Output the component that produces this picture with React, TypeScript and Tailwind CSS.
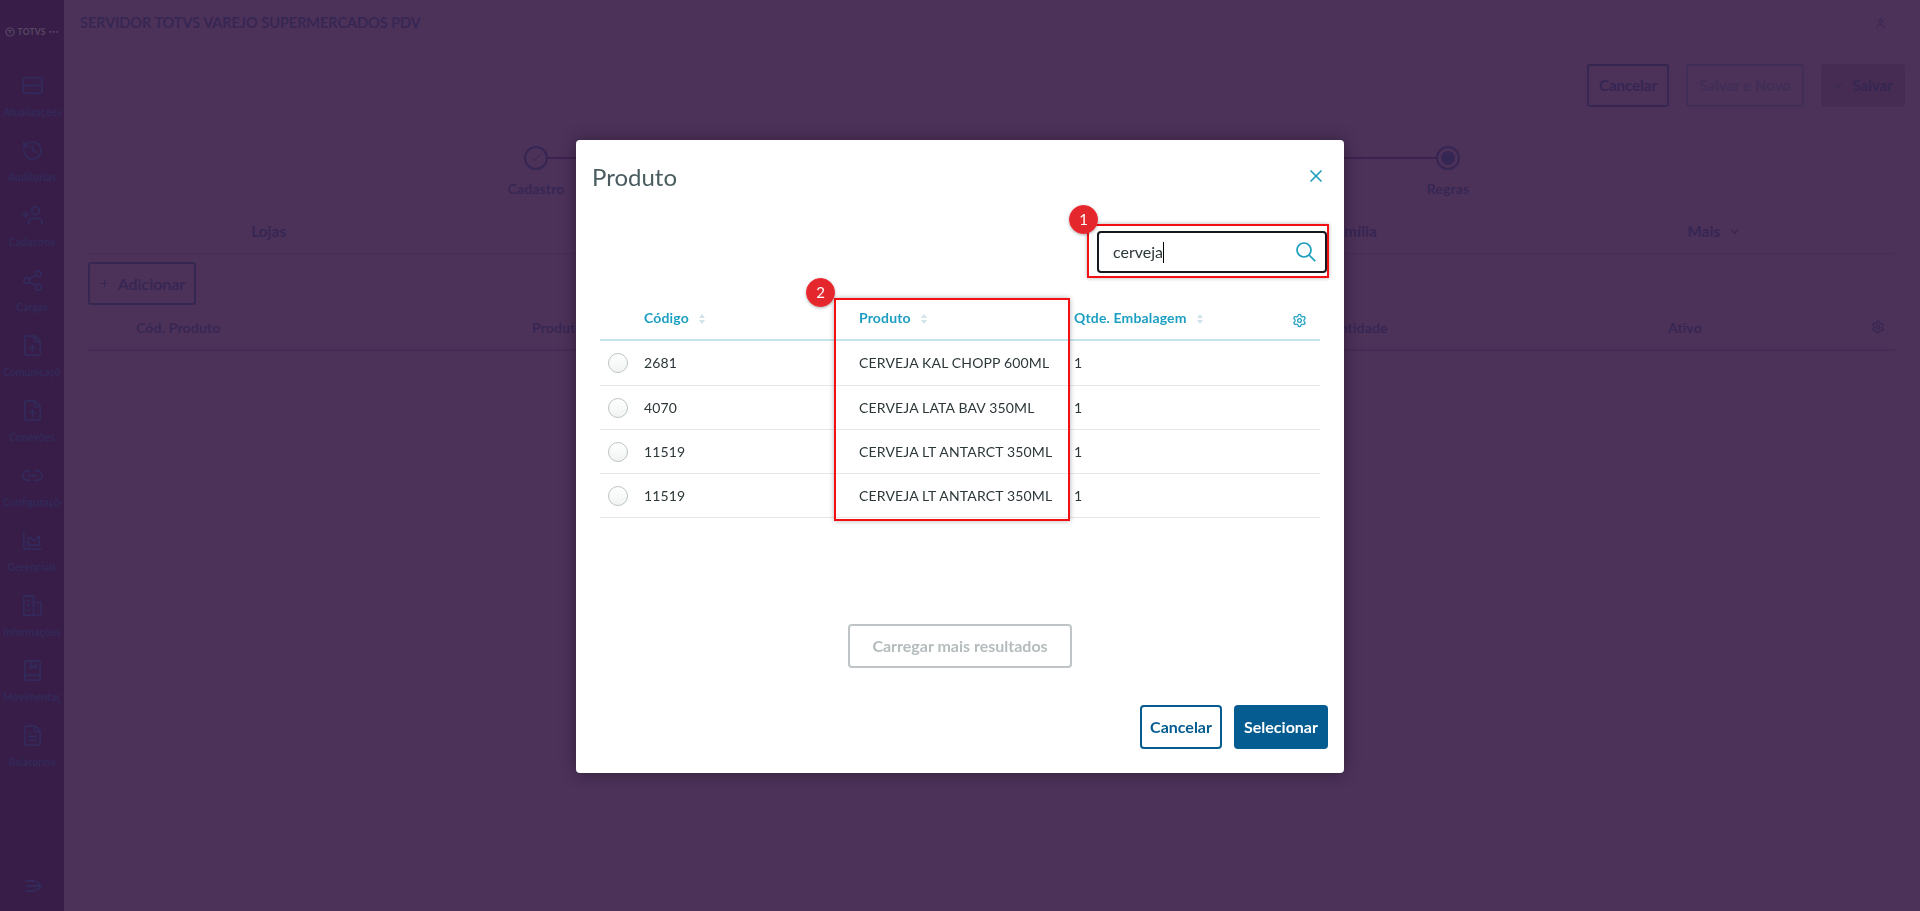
import { History, UserPlus, Share2, FileUp, Link2, BookMarked, FileText, Check, ChevronDown, Plus, Settings, X, User, ChartArea } from "lucide-react";
import type { ComponentType } from "react";

const FONT = "font-['Lato','Noto_Sans',sans-serif]";

type IconProps = { size?: number; strokeWidth?: number };

function ServerIcon({ size = 24, strokeWidth = 2 }: IconProps) {
  return (
    <svg width={size} height={size} viewBox="0 0 24 24" fill="none" stroke="currentColor" strokeWidth={strokeWidth}>
      <rect x="2" y="4" width="20" height="16" rx="2" />
      <path d="M2 12h20M14 8h1M17 8h1M14 16h1M17 16h1" />
    </svg>
  );
}

function BuildingsIcon({ size = 24, strokeWidth = 2 }: IconProps) {
  return (
    <svg width={size} height={size} viewBox="0 0 24 24" fill="none" stroke="currentColor" strokeWidth={strokeWidth}>
      <path d="M3 22V2h10v20zM13 9h8v13h-8" />
      <path d="M6 7h4M6 12h4M6 17h4M16 13h2M16 17h2" />
    </svg>
  );
}

function AddUserIcon({ size = 24, strokeWidth = 2 }: IconProps) {
  return <UserPlus size={size} strokeWidth={strokeWidth} className="-scale-x-100" />;
}

function ExpandIcon() {
  return (
    <svg width="18" height="14" viewBox="0 0 18 14" fill="none" stroke="currentColor" strokeWidth="2">
      <path d="M1 2h9M1 7h15M1 12h9M11 2l5 5-5 5" />
    </svg>
  );
}

function SearchGlyph() {
  return (
    <svg width="20" height="20" viewBox="0 0 20 20" fill="none" stroke="currentColor" strokeWidth="1.7" className="text-[#1b9dbd]">
      <circle cx="8" cy="8" r="7" />
      <path d="M13 13l6.2 6.2" />
    </svg>
  );
}

function SortIcon() {
  return (
    <svg width="6" height="10" viewBox="0 0 6 10" className="ml-[10px] inline-block" fill="#cfe3e9">
      <path d="M3 0l3 4H0zM3 10L0 6h6z" />
    </svg>
  );
}

const nav: { label: string; icon: ComponentType<IconProps> }[] = [
  { label: "Atualizações", icon: ServerIcon },
  { label: "Auditorias", icon: History },
  { label: "Cadastros", icon: AddUserIcon },
  { label: "Cargas", icon: Share2 },
  { label: "Comunicações", icon: FileUp },
  { label: "Conexões", icon: FileUp },
  { label: "Configurações", icon: Link2 },
  { label: "Gerenciais", icon: ChartArea },
  { label: "Informações", icon: BuildingsIcon },
  { label: "Movimentações", icon: BookMarked },
  { label: "Relatórios", icon: FileText },
];

const rows = [
  ["2681", "CERVEJA KAL CHOPP 600ML", "1"],
  ["4070", "CERVEJA LATA BAV 350ML", "1"],
  ["11519", "CERVEJA LT ANTARCT 350ML", "1"],
  ["11519", "CERVEJA LT ANTARCT 350ML", "1"],
];

function Sidebar() {
  return (
    <aside className="w-16 h-full shrink-0 bg-[#371d47] text-[#33295a] flex flex-col">
      <div className="h-[65px] shrink-0 flex items-center justify-center gap-[3px] text-[#574863] border-b border-[#391f49]">
        <svg width="10" height="10" viewBox="0 0 10 10" fill="none" stroke="currentColor" strokeWidth="1.2">
          <circle cx="5" cy="5" r="4" />
          <path d="M3 3.5h4M5 3.5v3" />
        </svg>
        <span className="text-[8.5px] font-bold leading-none tracking-[0.2px]">TOTVS</span>
        <span className="text-[4px] leading-none tracking-[1.2px]">●●●</span>
      </div>
      {nav.map((item) => {
        const Icon = item.icon;
        return (
          <div key={item.label} className="h-[65px] shrink-0 flex flex-col items-center pt-[9px] border-b border-[#391f49]">
            <Icon size={23} strokeWidth={2} />
            <span className="mt-[8px] w-[58px] overflow-hidden whitespace-nowrap text-center text-[10.5px] font-bold leading-[14px]">
              {item.label}
            </span>
          </div>
        );
      })}
      <div className="mt-auto pb-[18px] flex justify-center pl-[4px]">
        <ExpandIcon />
      </div>
    </aside>
  );
}

function Background() {
  return (
    <main className="flex-1 h-full min-w-0 text-[#352653] flex flex-col">
      <header className="h-[46px] pl-4 pr-[28px] flex items-center justify-between">
        <span className="text-[14.5px] font-semibold">SERVIDOR TOTVS VAREJO SUPERMERCADOS PDV</span>
        <span className="w-6 h-6 rounded-full border border-[#4f3560] flex items-center justify-center">
          <User size={11} />
        </span>
      </header>

      <div className="mt-[18px] pr-[15px] flex justify-end gap-[17px] text-[15px] font-bold">
        <button className="w-[82px] h-[43px] rounded-[3px] border-2 border-[#362752]">Cancelar</button>
        <button className="w-[118px] h-[43px] rounded-[3px] border-2 border-[#412e57] text-[#412e57]">Salvar e Novo</button>
        <button className="w-[84px] h-[43px] rounded-[3px] bg-[#462c52] flex items-center justify-center gap-[8px]">
          <Check size={11} />
          Salvar
        </button>
      </div>

      <div className="mt-[39px] ml-[460px] w-[936px] h-6 flex items-center">
        <span className="w-6 h-6 rounded-full border-2 border-[#352653] flex items-center justify-center shrink-0">
          <Check size={12} />
        </span>
        <span className="flex-1 h-[2px] bg-[#3d2250]" />
        <span className="w-6 h-6 rounded-full border-2 border-[#352653] flex items-center justify-center shrink-0">
          <span className="w-[14px] h-[14px] rounded-full bg-[#352653]" />
        </span>
      </div>
      <div className="mt-[10px] ml-[408px] w-[1040px] flex justify-between text-[14px] font-semibold leading-[18px] tracking-[0.2px]">
        <span className="w-[128px] text-center">Cadastro</span>
        <span className="w-[128px] text-center">Regras</span>
      </div>

      <div className="ml-6 mr-[25px] mt-[12px] h-[44px] border-b border-[#472c55] grid grid-cols-5 items-center text-[15px] font-bold tracking-[0.2px]">
        <span className="text-center">Lojas</span>
        <span />
        <span />
        <span className="text-center">Família</span>
        <span className="flex items-center justify-center gap-2">
          Mais <ChevronDown size={13} />
        </span>
      </div>

      <button className="ml-6 mt-[8px] w-[108px] h-[43px] rounded-[3px] border-2 border-[#362752] flex items-center justify-center gap-[8px] text-[16px] font-semibold">
        <Plus size={11} />
        Adicionar
      </button>

      <div className="ml-6 mr-[25px] h-[46px] border-b-2 border-[#472a55] flex items-center text-[14px] font-semibold tracking-[0.2px]">
        <span className="ml-12 w-[396px]">Cód. Produto</span>
        <span className="w-[781px]">Produto</span>
        <span className="w-[355px]">Quantidade</span>
        <span className="flex-1">Ativo</span>
        <span className="mr-[10px]">
          <Settings size={14} />
        </span>
      </div>
    </main>
  );
}

function Badge({ n, className }: { n: string; className: string }) {
  return (
    <span className={`absolute w-[29px] h-[29px] rounded-full bg-[#e3272d] border border-[#f3272d] text-white text-[15px] flex items-center justify-center shadow-[0_1px_3px_rgba(0,0,0,0.3)] ${className}`}>
      {n}
    </span>
  );
}

function Modal() {
  return (
    <div className="fixed inset-0 flex items-center justify-center pt-[2px]">
      <section className="relative w-[768px] h-[633px] rounded-[4px] bg-white shadow-[0_0_16px_rgba(0,0,0,0.35)] flex flex-col">
        <div className="h-[74px] pl-[16px] pr-[18px] flex items-center justify-between">
          <h2 className="text-[24px] text-[#4a5c60] leading-none">Produto</h2>
          <X size={20} strokeWidth={2} className="text-[#1b9dbd] -mt-[2px]" />
        </div>

        <div className="mt-[17px] pr-[17px] flex justify-end">
          <div className="w-[230px] h-[42px] rounded-[4px] border-2 border-[#15191b] flex items-center justify-between pl-[14px] pr-[9px]">
            <span className="flex items-center text-[16px] text-[#2c3739]">
              cerveja
              <span className="w-px h-[21px] bg-black" />
            </span>
            <SearchGlyph />
          </div>
        </div>

        <div className="mx-6 tracking-[0.15px]">
          <div className="h-[68px] pt-[36px] grid grid-cols-[44px_215px_215px_1fr_32px] items-start text-[14px] font-bold text-[#1d9fc2] border-b-2 border-[#c5e5ee]">
            <span />
            <span className="leading-[18px]">Código<SortIcon /></span>
            <span className="leading-[18px]">Produto<SortIcon /></span>
            <span className="leading-[18px] whitespace-nowrap">Qtde. Embalagem<SortIcon /></span>
            <Settings size={15} className="mt-[4px] ml-[4px]" />
          </div>
          {rows.map((r, i) => (
            <div key={i} className={`${i === 0 ? "h-[45px]" : "h-[44px]"} grid grid-cols-[44px_215px_215px_1fr] items-center text-[14px] text-[#2c3739] border-b border-[#e6e9ea]`}>
              <span className="ml-2 w-5 h-5 rounded-full border border-[#bdc4c6] bg-gradient-to-b from-white to-[#f1f3f3]" />
              <span className="mb-[1px]">{r[0]}</span>
              <span className="mb-[1px] whitespace-nowrap">{r[1]}</span>
              <span className="mb-[1px]">{r[2]}</span>
            </div>
          ))}
        </div>

        <button className="mt-[106px] self-center w-[224px] h-[44px] rounded-[4px] border-2 border-[#bfc5c7] text-[16px] font-bold text-[#b5bcbe]">
          Carregar mais resultados
        </button>

        <div className="mt-[37px] pr-4 flex justify-end gap-3">
          <button className="w-[82px] h-[44px] rounded-[4px] border-2 border-[#045c91] text-[16px] font-bold text-[#045c91]">Cancelar</button>
          <button className="w-[94px] h-[44px] rounded-[4px] bg-[#045c91] text-[16px] font-bold text-white">Selecionar</button>
        </div>

        <div className="absolute left-[511px] top-[84px] w-[242px] h-[54px] border-2 border-[#f40f12] shadow-[0_0_4px_rgba(0,0,0,0.3)]" />
        <Badge n="1" className="left-[493px] top-[65px]" />
        <div className="absolute left-[258px] top-[158px] w-[236px] h-[223px] border-2 border-[#f40f12] shadow-[0_0_5px_rgba(0,0,0,0.3)]" />
        <Badge n="2" className="left-[230px] top-[138px]" />
      </section>
    </div>
  );
}

export default function App() {
  return (
    <div className={`relative flex h-screen w-full overflow-hidden bg-[#4c3159] ${FONT}`}>
      <Sidebar />
      <Background />
      <Modal />
    </div>
  );
}
